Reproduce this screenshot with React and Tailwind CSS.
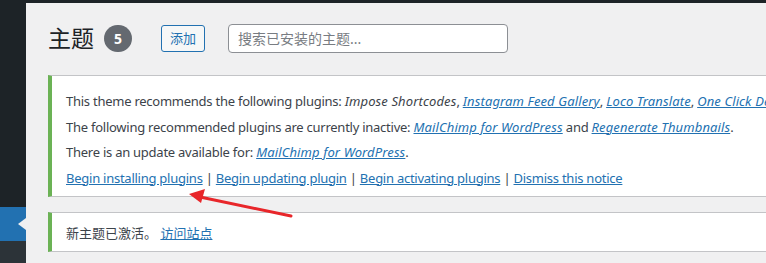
import React from 'react'

const font = { fontFamily: '"Noto Sans", "Noto Sans CJK SC", sans-serif' }

const A = ({ children, italic }) => (
    <a
        href="#"
        className={`text-[#2271b1] underline ${italic ? 'italic tracking-[0.12px]' : ''}`}>
        {children}
    </a>
)

const Line = ({ children }) => (
    <div className="h-[25.5px] leading-[25.5px] whitespace-nowrap tracking-[-0.25px]">{children}</div>
)

const App = () => (
    <div className="relative w-[766px] h-[263px] overflow-hidden bg-[#f0f0f1] flex flex-col" style={font}>
        <div className="h-[3px] bg-[#1d2327] shrink-0" />
        <div className="flex flex-1 min-h-0">
            {/* sidebar */}
            <div className="w-[26px] shrink-0 flex flex-col">
                <div className="h-[204px] bg-[#1d2327]" />
                <div className="h-[34px] bg-[#2271b1] flex items-center justify-end">
                    <div className="w-0 h-0 border-y-[6px] border-y-transparent border-r-[8px] border-r-[#f0f0f1]" />
                </div>
                <div className="flex-1 bg-[#2c3338]" />
            </div>

            {/* main */}
            <div className="flex-1 min-w-0 pl-[22px] pt-[21px] text-[13px] text-[#3c434a]">
                <div className="flex items-center h-[29px]">
                    <h1 className="text-[23px] leading-none text-[#1d2327]">主题</h1>
                    <span className="ml-[10px] w-[28px] h-[27px] rounded-full bg-[#646970] text-white text-[14px] font-bold flex items-center justify-center">
                        5
                    </span>
                    <button className="ml-[29px] h-[27px] w-[44px] border border-[#2271b1] rounded-[3px] bg-[#f6f7f7] text-[#2271b1] text-[13px]">
                        添加
                    </button>
                    <input
                        className="ml-[23px] w-[280px] h-[29px] border border-[#8c8f94] rounded-[4px] bg-white px-[9px] text-[14px] placeholder:text-[#787c82] outline-none"
                        placeholder="搜索已安装的主题..."
                    />
                </div>

                <div className="mt-[22px] w-[900px] h-[122px] bg-white border-t border-b border-[#c3c4c7] border-l-4 border-l-[#6bb255] pl-[14px] pt-[13px]">
                    <Line>
                        This theme recommends the following plugins:{' '}
                        <i className="tracking-[0.12px]">Impose Shortcodes</i>,{' '}
                        <A italic>Instagram Feed Gallery</A>, <A italic>Loco Translate</A>,{' '}
                        <A italic>One Click Demo Import</A>
                    </Line>
                    <Line>
                        The following recommended plugins are currently inactive:{' '}
                        <A italic>MailChimp for WordPress</A> and <A italic>Regenerate Thumbnails</A>.
                    </Line>
                    <Line>
                        There is an update available for: <A italic>MailChimp for WordPress</A>.
                    </Line>
                    <Line>
                        <A>Begin installing plugins</A> | <A>Begin updating plugin</A> |{' '}
                        <A>Begin activating plugins</A> | <A>Dismiss this notice</A>
                    </Line>
                </div>

                <div className="mt-[15px] w-[900px] h-[40px] bg-white border-t border-b border-[#c3c4c7] border-l-4 border-l-[#6bb255] pl-[14px] pt-[11px] leading-[19.5px]">
                    新主题已激活。 <A>访问站点</A>
                </div>
            </div>
        </div>

        <svg className="absolute inset-0 pointer-events-none" width="766" height="263">
            <line x1="291" y1="216" x2="200" y2="197" stroke="#e8262a" strokeWidth="3" strokeLinecap="round" />
            <polygon points="189,194 205,189 201,203" fill="#e8262a" />
        </svg>
    </div>
)

export default App
